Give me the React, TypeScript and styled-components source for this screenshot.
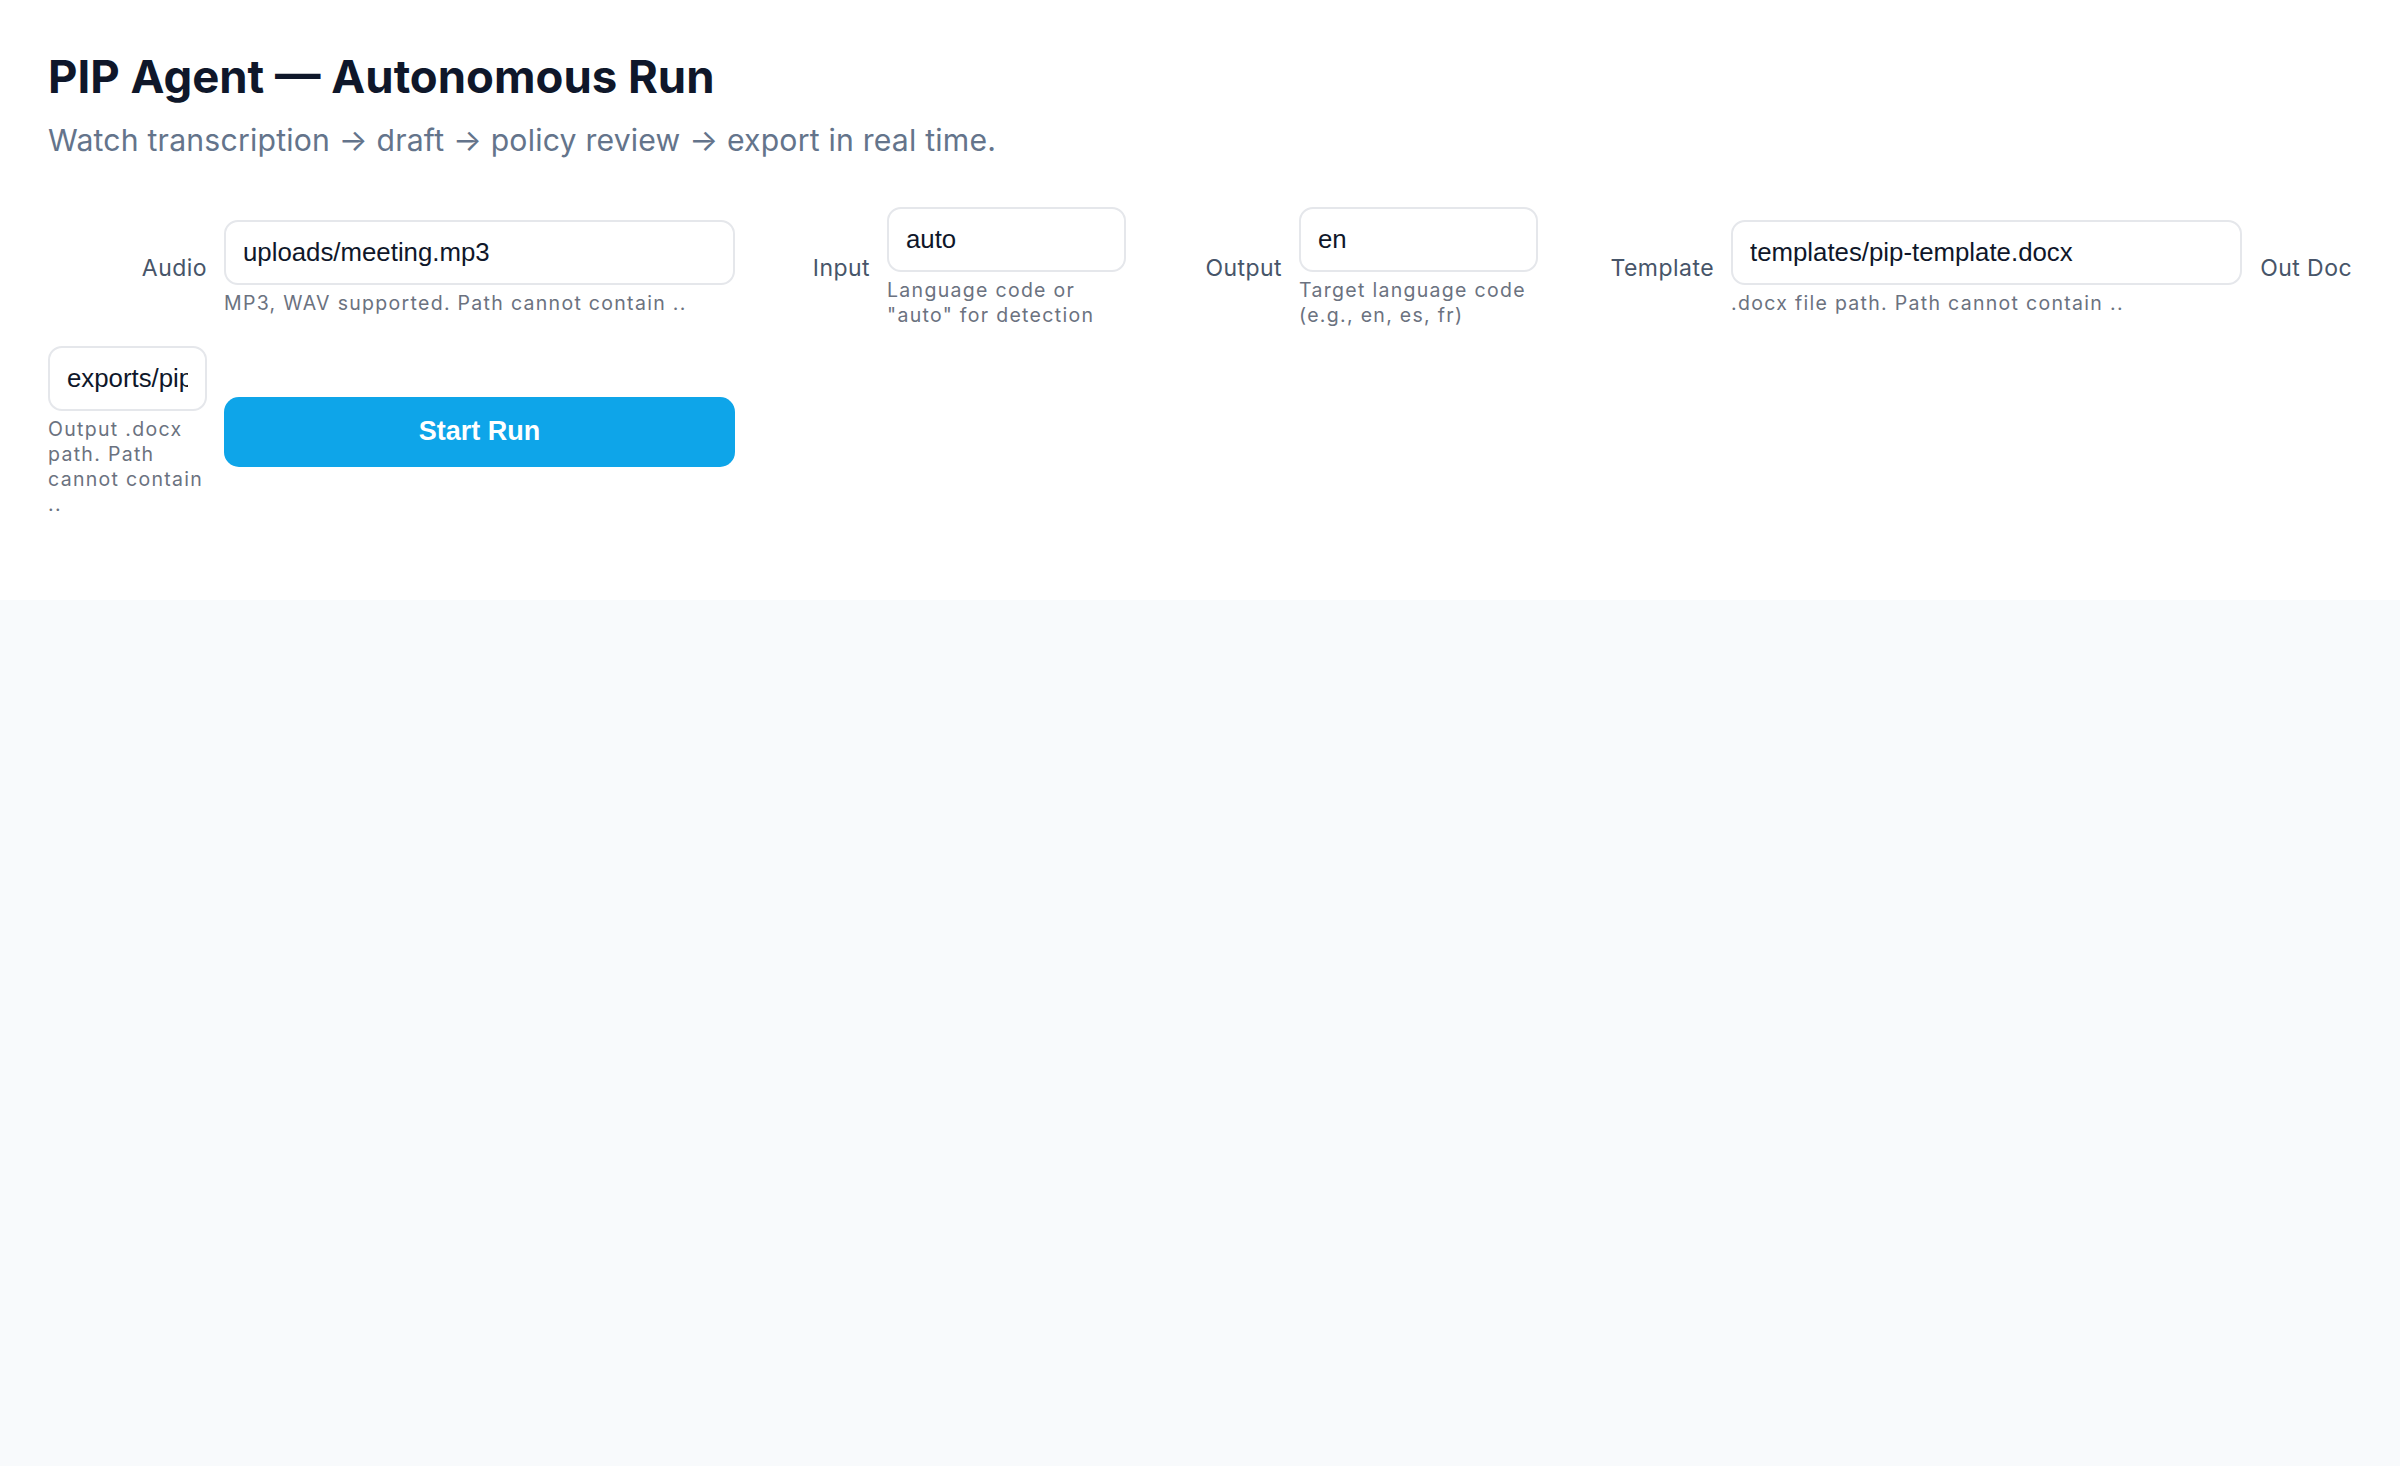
import React from "react";
import styled, { createGlobalStyle } from "styled-components";

const GlobalStyle = createGlobalStyle`
  html, body {
    margin: 0;
    padding: 0;
    background: #f8fafc;
  }
  body {
    font-family: Inter, "Noto Sans", sans-serif;
  }
  * { box-sizing: border-box; }
`;

const Page = styled.div`
  min-height: 100vh;
  display: flex;
  flex-direction: column;
`;

const Header = styled.header`
  background: #ffffff;
  padding: 48px 48px 83px;
`;

const Title = styled.h1`
  margin: 0 0 13px;
  font-size: 45.5px;
  line-height: 58px;
  font-weight: 700;
  color: #0f172a;
  letter-spacing: 0;
`;

const Subtitle = styled.p`
  margin: 0 0 46px;
  font-size: 30.2px;
  line-height: 42px;
  color: #64748b;
  letter-spacing: 0.2px;
`;

const Form = styled.form`
  display: grid;
  grid-template-columns: 159fr 511fr 118fr 239fr 139fr 239fr 159fr 511fr 93fr;
  column-gap: 17px;
  row-gap: 18px;
  align-items: center;
`;

const Label = styled.label`
  text-align: right;
  font-size: 23px;
  color: #475569;
  letter-spacing: 0.45px;
  white-space: nowrap;
`;

const Field = styled.div`
  display: flex;
  flex-direction: column;
  gap: 6px;
  min-width: 0;
`;

const TextInput = styled.input`
  width: 100%;
  height: 65px;
  padding: 0 17px;
  border: 2px solid #e5e7eb;
  border-radius: 14px;
  background: #ffffff;
  font-family: "Liberation Sans", Arial, sans-serif;
  font-size: 25.8px;
  color: #0f172a;
  outline: none;
`;

const Help = styled.div`
  font-size: 19.5px;
  line-height: 25px;
  color: #6b7280;
  letter-spacing: 1.3px;
`;

const RunButton = styled.button`
  height: 70px;
  border: none;
  border-radius: 15px;
  background: #0ea5e9;
  color: #ffffff;
  font-family: "Liberation Sans", Arial, sans-serif;
  font-weight: 700;
  font-size: 27px;
  cursor: pointer;
`;

const Main = styled.main`
  flex: 1;
  background: #f8fafc;
`;

type FieldProps = {
  id: string;
  value: string;
  help: string;
};

function FormField({ id, value, help }: FieldProps) {
  return (
    <Field>
      <TextInput id={id} defaultValue={value} />
      <Help>{help}</Help>
    </Field>
  );
}

export default function App() {
  return (
    <>
      <GlobalStyle />
      <Page>
        <Header>
          <Title>PIP Agent — Autonomous Run</Title>
          <Subtitle>Watch transcription → draft → policy review → export in real time.</Subtitle>
          <Form onSubmit={(e) => e.preventDefault()}>
            <Label htmlFor="audio">Audio</Label>
            <FormField id="audio" value="uploads/meeting.mp3" help="MP3, WAV supported. Path cannot contain .." />
            <Label htmlFor="input-lang">Input</Label>
            <FormField id="input-lang" value="auto" help={'Language code or "auto" for detection'} />
            <Label htmlFor="output-lang">Output</Label>
            <FormField id="output-lang" value="en" help="Target language code (e.g., en, es, fr)" />
            <Label htmlFor="template">Template</Label>
            <FormField id="template" value="templates/pip-template.docx" help=".docx file path. Path cannot contain .." />
            <Label htmlFor="outdoc">Out Doc</Label>
            <FormField id="outdoc" value="exports/pip-output.docx" help="Output .docx path. Path cannot contain .." />
            <RunButton type="submit">Start Run</RunButton>
          </Form>
        </Header>
        <Main />
      </Page>
    </>
  );
}
